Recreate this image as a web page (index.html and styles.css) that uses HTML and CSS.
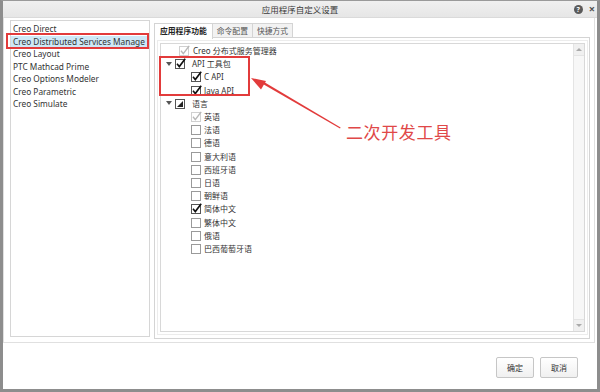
FILE: index.html
```html
<!DOCTYPE html>
<html lang="zh-CN">
<head>
    <meta charset="UTF-8">
    <title>应用程序自定义设置</title>
    <link rel="stylesheet" href="styles.css">
</head>
<body>
<svg width="0" height="0" class="defs">
    <symbol id="cb-off" viewBox="0 0 11 11"><rect x="0.5" y="1.5" width="9" height="9" fill="#fff" stroke="#9a9a9a"/></symbol>
    <symbol id="cb-on" viewBox="0 0 11 11"><rect x="0.5" y="1.5" width="9" height="9" fill="#fff" stroke="#555"/><path d="M2 5.8 L4.3 8.6 L10.2 0.8" fill="none" stroke="#111" stroke-width="1.6"/></symbol>
    <symbol id="cb-dis" viewBox="0 0 11 11"><rect x="0.5" y="1.5" width="9" height="9" fill="#fff" stroke="#d0d0d0"/><path d="M2 5.8 L4.3 8.6 L10.2 0.8" fill="none" stroke="#b8b8b8" stroke-width="1.4"/></symbol>
    <symbol id="cb-part" viewBox="0 0 11 11"><rect x="0.5" y="1.5" width="9" height="9" fill="#fff" stroke="#555"/><path d="M2 9 L8 9 L8 3 Z" fill="#222"/></symbol>
</svg>

<div class="screen">
    <div class="window">
        <div class="titlebar">
            <span class="title">应用程序自定义设置</span>
            <div class="title-icons">
                <span class="help">?</span>
                <span class="close">×</span>
            </div>
        </div>

        <div class="main">
            <div class="group">
                <ul class="app-list">
                    <li>Creo Direct</li>
                    <li class="selected">Creo Distributed Services Manage</li>
                    <li>Creo Layout</li>
                    <li>PTC Mathcad Prime</li>
                    <li>Creo Options Modeler</li>
                    <li>Creo Parametric</li>
                    <li>Creo Simulate</li>
                </ul>

                <div class="tabs">
                    <div class="tab-bar">
                        <span class="tab active">应用程序功能</span>
                        <span class="tab">命令配置</span>
                        <span class="tab">快捷方式</span>
                    </div>
                    <div class="tab-pane">
                        <div class="tree">
                            <div class="tree-rows">
                                <div class="row top"><svg class="cb"><use href="#cb-dis"/></svg><span>Creo 分布式服务管理器</span></div>
                                <div class="row lvl0"><span class="twist"></span><svg class="cb"><use href="#cb-on"/></svg><span>API 工具包</span></div>
                                <div class="row lvl1"><svg class="cb"><use href="#cb-on"/></svg><span>C API</span></div>
                                <div class="row lvl1"><svg class="cb"><use href="#cb-on"/></svg><span>Java API</span></div>
                                <div class="row lvl0"><span class="twist"></span><svg class="cb"><use href="#cb-part"/></svg><span>语言</span></div>
                                <div class="row lvl1"><svg class="cb"><use href="#cb-dis"/></svg><span>英语</span></div>
                                <div class="row lvl1"><svg class="cb"><use href="#cb-off"/></svg><span>法语</span></div>
                                <div class="row lvl1"><svg class="cb"><use href="#cb-off"/></svg><span>德语</span></div>
                                <div class="row lvl1"><svg class="cb"><use href="#cb-off"/></svg><span>意大利语</span></div>
                                <div class="row lvl1"><svg class="cb"><use href="#cb-off"/></svg><span>西班牙语</span></div>
                                <div class="row lvl1"><svg class="cb"><use href="#cb-off"/></svg><span>日语</span></div>
                                <div class="row lvl1"><svg class="cb"><use href="#cb-off"/></svg><span>朝鲜语</span></div>
                                <div class="row lvl1"><svg class="cb"><use href="#cb-on"/></svg><span>简体中文</span></div>
                                <div class="row lvl1"><svg class="cb"><use href="#cb-off"/></svg><span>繁体中文</span></div>
                                <div class="row lvl1"><svg class="cb"><use href="#cb-off"/></svg><span>俄语</span></div>
                                <div class="row lvl1"><svg class="cb"><use href="#cb-off"/></svg><span>巴西葡萄牙语</span></div>
                            </div>
                            <div class="scrollbar">
                                <span class="sb-btn"><span class="arrow-up"></span></span>
                                <span class="sb-track"></span>
                                <span class="sb-btn"><span class="arrow-down"></span></span>
                            </div>
                        </div>
                    </div>
                </div>
            </div>

            <div class="buttons">
                <button class="btn">确定</button>
                <button class="btn">取消</button>
            </div>
        </div>
    </div>

    <!-- annotations drawn over the dialog -->
    <svg class="annot" width="600" height="392" viewBox="0 0 600 392">
        <rect x="7" y="34" width="141" height="14" fill="none" stroke="#e23b3b" stroke-width="2"/>
        <rect x="160" y="57" width="89" height="38" fill="none" stroke="#e23b3b" stroke-width="2"/>
        <path d="M340 128.4 L262 83.4 L263.2 81.6 L340.6 127.6 Z" fill="#e23b3b"/>
        <path d="M251 78 L266 81 L261 89.5 Z" fill="#e23b3b"/>
    </svg>
    <div class="annot-text">二次开发工具</div>
</div>
</body>
</html>
```

FILE: styles.css
```css
* {
    box-sizing: border-box;
}
body {
    margin: 0;
    width: 600px;
    height: 392px;
    overflow: hidden;
    background: #fff;
    font-family: "Noto Sans", "Noto Sans CJK SC", sans-serif;
    color: #333;
}
.defs {
    position: absolute;
}
.screen {
    position: relative;
    width: 600px;
    height: 392px;
}
.window {
    width: 600px;
    height: 392px;
    border: 3px solid #8d8d8d;
    border-top: 1px solid #9a9a9a;
    background: #fff;
    display: flex;
    flex-direction: column;
}
.titlebar {
    height: 17px;
    background: linear-gradient(#f0f0f0, #e6e6e6);
    border-bottom: 1px solid #dadada;
    display: flex;
    align-items: center;
    justify-content: center;
    position: relative;
}
.title {
    font-size: 8.5px;
    color: #3a3a3a;
}
.title-icons {
    position: absolute;
    right: 2px;
    top: 3px;
    display: flex;
    align-items: center;
    gap: 6px;
}
.help {
    width: 9px;
    height: 9px;
    border-radius: 50%;
    background: #5a5a5a;
    color: #fff;
    font-size: 7px;
    font-weight: bold;
    line-height: 9px;
    text-align: center;
}
.close {
    font-size: 11px;
    line-height: 10px;
    font-weight: bold;
    color: #555;
}
.main {
    flex: 1;
    display: flex;
    flex-direction: column;
}
.group {
    height: 325px;
    margin-right: 2px;
    border: 1px solid #e0e0e0;
    border-top: none;
    padding: 2px 0 0 6px;
    display: flex;
    gap: 4px;
}
.app-list {
    list-style: none;
    margin: 0;
    padding: 2px 0 0 0;
    width: 140px;
    height: 317px;
    border: 1px solid #d6d6d6;
    overflow: hidden;
    font-size: 8.3px;
    line-height: 12.5px;
}
.app-list li {
    padding-left: 2px;
    white-space: nowrap;
}
.app-list li.selected {
    background: #cde8f7;
}
.tabs {
    width: 436px;
    display: flex;
    flex-direction: column;
}
.tab-bar {
    display: flex;
    padding-top: 3px;
    height: 18px;
}
.tab {
    height: 15px;
    padding: 0 4px;
    font-size: 7.8px;
    line-height: 14px;
    color: #555;
    background: #f2f2f2;
    border: 1px solid #d4d4d4;
    border-left: none;
    border-bottom: none;
}
.tab.active {
    background: #fff;
    color: #222;
    font-weight: bold;
    border-left: 1px solid #d4d4d4;
    height: 16px;
    padding: 0 5px;
    position: relative;
    z-index: 1;
}
.tab-pane {
    height: 302px;
    border: 1px solid #d4d4d4;
    margin-top: -1px;
    padding: 5px 4px 6px 5px;
}
.tree {
    height: 100%;
    border: 1px solid #d8d8d8;
    outline: 1px solid #ececec;
    outline-offset: 2px;
    display: flex;
    font-size: 8px;
    color: #333;
}
.tree-rows {
    flex: 1;
}
.row {
    height: 13.2px;
    display: flex;
    align-items: center;
    white-space: nowrap;
}
.row.top {
    padding-left: 18px;
}
.row.lvl0 {
    padding-left: 5px;
}
.row.lvl1 {
    padding-left: 30px;
}
.twist {
    width: 0;
    height: 0;
    border-left: 3px solid transparent;
    border-right: 3px solid transparent;
    border-top: 4px solid #555;
    margin-right: 3px;
}
.cb {
    width: 11px;
    height: 11px;
    margin-right: 2px;
    flex: none;
}
.lvl0 .cb {
    margin-right: 6px;
}
.top .cb {
    margin-right: 3px;
}
.scrollbar {
    width: 11px;
    border-left: 1px solid #e4e4e4;
    background: #f7f7f7;
    display: flex;
    flex-direction: column;
}
.sb-btn {
    height: 12px;
    background: #f0f0f0;
    border-bottom: 1px solid #e4e4e4;
    display: flex;
    align-items: center;
    justify-content: center;
}
.sb-btn:last-child {
    border-bottom: none;
    border-top: 1px solid #e4e4e4;
}
.sb-track {
    flex: 1;
}
.arrow-up {
    border-left: 3px solid transparent;
    border-right: 3px solid transparent;
    border-bottom: 3px solid #aaa;
}
.arrow-down {
    border-left: 3px solid transparent;
    border-right: 3px solid transparent;
    border-top: 3px solid #aaa;
}
.buttons {
    display: flex;
    justify-content: flex-end;
    gap: 6px;
    padding: 14px 19px 0 0;
}
.btn {
    width: 38px;
    height: 21px;
    padding: 0;
    border: 1px solid #c6c6c6;
    border-radius: 2px;
    background: linear-gradient(#ffffff, #f0f0f0);
    font-family: "Noto Sans CJK SC", sans-serif;
    font-size: 8px;
    color: #333;
}
.annot {
    position: absolute;
    left: 0;
    top: 0;
}
.annot-text {
    position: absolute;
    left: 346px;
    top: 120px;
    font-family: "Noto Sans CJK SC", sans-serif;
    font-size: 17px;
    line-height: 24px;
    color: #e04848;
    letter-spacing: 0.6px;
}
```
